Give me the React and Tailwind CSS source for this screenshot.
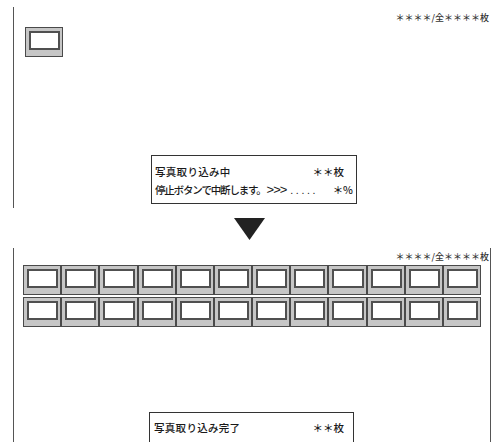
import React from "react";

const FONT = { fontFamily: '"Noto Sans CJK JP", "Noto Sans", sans-serif' };
const LIB = { fontFamily: '"Liberation Sans", sans-serif' };

function Thumb() {
  return (
    <div className="h-[30px] border border-[#4a4a4a] bg-[#c6c6c6] pl-[3px] pr-[2px] pt-[3px] pb-[6px] flex">
      <div className="flex-1 border-2 border-[#505050] bg-white" />
    </div>
  );
}

function Counter() {
  return (
    <div className="text-[9px] leading-[10px] text-[#333] font-medium whitespace-nowrap">
      ＊＊＊＊/全＊＊＊＊枚
    </div>
  );
}

export default function App() {
  const cells = Array.from({ length: 24 });
  return (
    <div className="w-[491px] h-[442px] bg-white overflow-hidden text-[#1a1a1a]" style={FONT}>
      {/* Section 1 */}
      <div className="ml-[13px] mt-[7px] h-[201px] border-l border-[#555] flex flex-col">
        <div className="flex justify-end pr-[2px] pt-[6px]">
          <Counter />
        </div>
        <div className="ml-[11px] mt-[4px] w-[38px]">
          <Thumb />
        </div>
        <div className="ml-[137px] mt-[98px] w-[206px] h-[49px] border-[1.5px] border-[#333] px-[3px] pt-[7px] text-[10.5px] leading-[18px] font-medium">
          <div className="flex justify-between pr-[9px] whitespace-nowrap">
            <span className="tracking-[0.3px]">写真取り込み中</span>
            <span>＊＊枚</span>
          </div>
          <div className="flex items-center whitespace-nowrap">
            <span className="tracking-[-1.2px]">停止ボタンで中断します。</span>
            <span className="text-[13px] tracking-[-1px] ml-[1px] font-normal" style={LIB}>&gt;&gt;&gt;</span>
            <span className="ml-[4px] tracking-[2.6px]" style={LIB}>.....</span>
            <span className="ml-auto">＊%</span>
          </div>
        </div>
      </div>

      {/* Arrow */}
      <div className="ml-[234px] mt-[10px]">
        <svg width="31" height="22" viewBox="0 0 31 22">
          <polygon points="0,0 31,0 15.5,22" fill="#222" />
        </svg>
      </div>

      {/* Section 2 */}
      <div className="ml-[13px] mt-[8px] w-[478px] h-[200px] border-l border-r border-[#555] flex flex-col">
        <div className="flex justify-end pr-[1px] pt-[4px]">
          <Counter />
        </div>
        <div className="ml-[9px] mt-[3px] w-[458px] grid grid-cols-12 gap-y-[2px]">
          {cells.map((_, i) => (
            <Thumb key={i} />
          ))}
        </div>
        <div className="ml-[135px] mt-[85px] w-[205px] h-[50px] border-[1.5px] border-[#333] border-b-0 px-[4px] pt-[6px] text-[10.5px] leading-[18px] font-medium">
          <div className="flex justify-between pr-[5px] whitespace-nowrap">
            <span className="tracking-[0.3px]">写真取り込み完了</span>
            <span>＊＊枚</span>
          </div>
        </div>
      </div>
    </div>
  );
}
